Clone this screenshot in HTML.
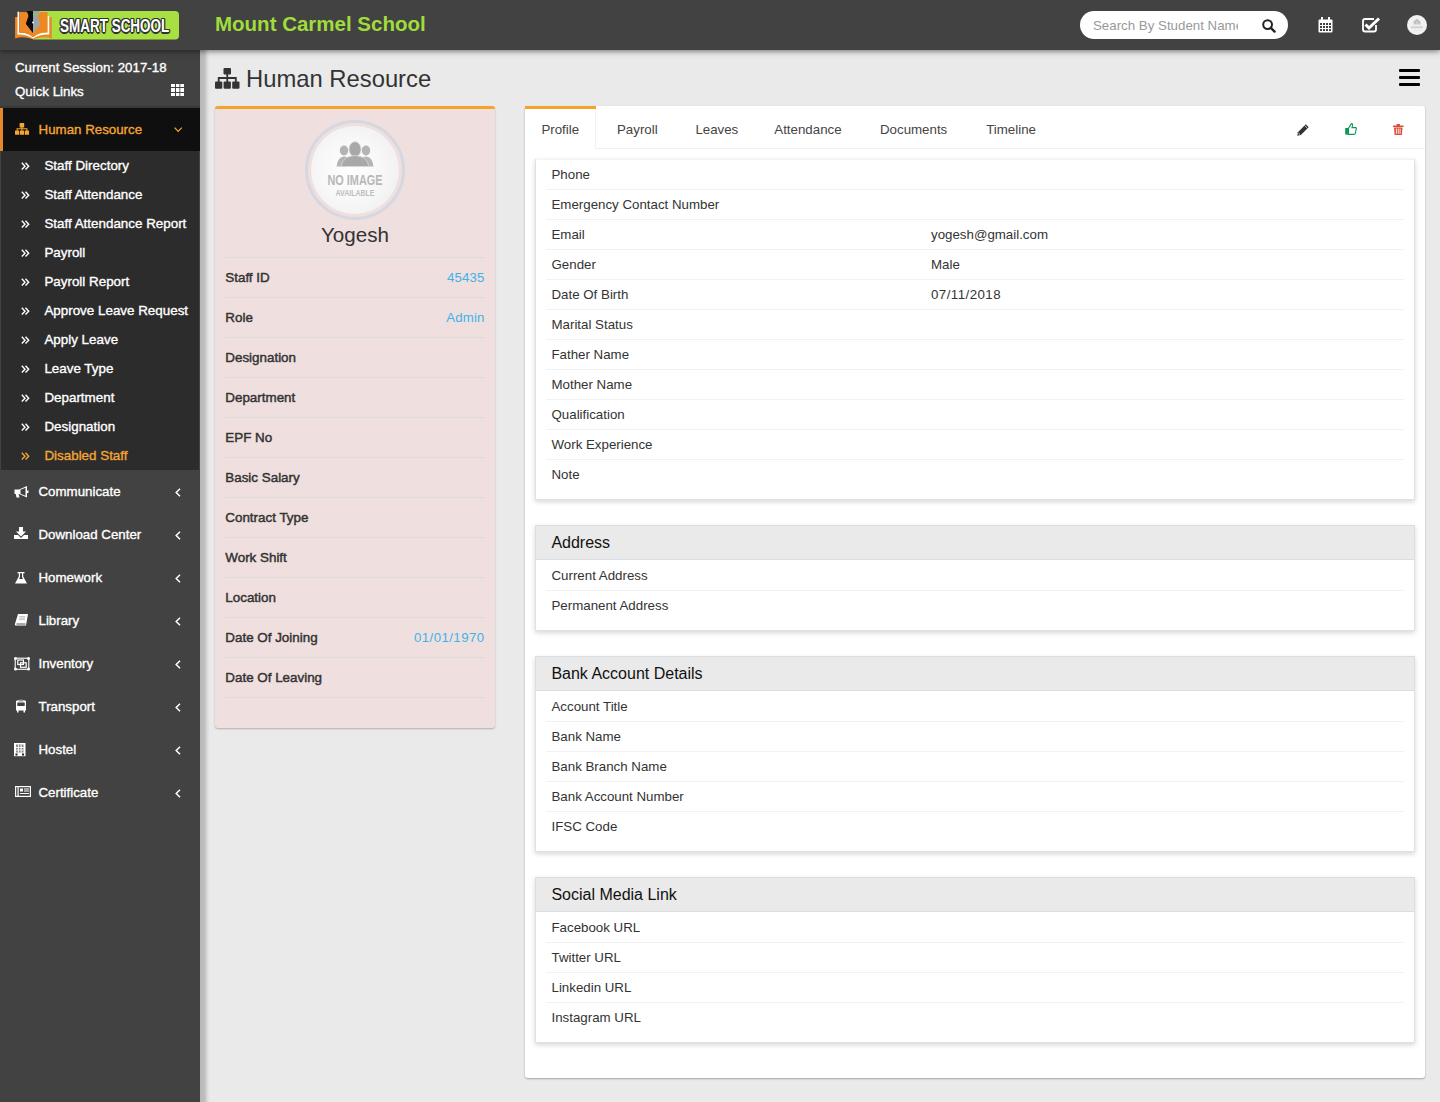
<!DOCTYPE html>
<html><head><meta charset="utf-8"><title>Human Resource</title><style>
*{margin:0;padding:0;box-sizing:border-box}
html,body{width:1440px;height:1102px;overflow:hidden}
body{background:#eaeaea;font-family:"Liberation Sans",sans-serif;position:relative}
.t{position:absolute;line-height:0;white-space:nowrap}
.a{position:absolute}
svg{position:absolute;overflow:visible}
</style></head>
<body>
<div class="a" style="left:0;top:0;width:1440px;height:50px;background:#424242;z-index:5;box-shadow:0 1px 6px rgba(0,0,0,.55)"></div>
<svg style="left:0;top:0;z-index:6" width="200" height="50" viewBox="0 0 200 50">
<path d="M33 11 H175 Q179 11 179 15 V35.5 Q179 39.5 175 39.5 H33 Z" fill="#a7e040"/>
<path d="M15.1 17.1 H18 V34 H48.5 V17.1 H51.8 V38.5 Q44 35.5 33 39.2 Q22 35.5 15.1 38.6 Z" fill="#ee8726"/>
<path d="M17.5 11.7 H19.2 V32.6 Q27 32 33 37.3 Q39 32 47.5 32.6 V16.2 H49.2 V34.6 Q40 34 33 38.6 Q26 34 17.5 34.6 Z" fill="#fff"/>
<path d="M19.2 12 H25.6 Q28.6 12.5 28.6 16 L25.9 23.7 L33 33 V37.3 Q27 32 19.2 32.6 Z" fill="#ee8726"/>
<path d="M40.3 12 H47.5 V32.6 Q39 32 33 37.3 V33 L40.2 23.7 L37.9 18 Q37.9 13 40.3 12 Z" fill="#ee8726"/>
<path d="M27 11 H33 V33 L25.9 23.7 L28.6 16 Z" fill="#0c0c0c"/>
<path d="M33 11 H39.3 L40.3 12 Q37.9 13 37.9 18 L40.2 23.7 L33 33 Z" fill="#9aa6ae"/>
<rect x="33" y="13.8" width="6" height="1" fill="#8ccf3a"/>
<circle cx="33" cy="22.5" r="0.9" fill="#fff"/>
</svg>
<div class="t" style="left:60px;top:26px;font-size:17.5px;font-weight:bold;color:#fff;transform-origin:0 0;transform:scaleX(0.77);z-index:7;text-shadow:-1.2px -1.2px 0 #333,1.2px -1.2px 0 #333,-1.2px 1.2px 0 #333,1.2px 1.2px 0 #333,0 1.5px 0 #333,1.5px 0 0 #333,-1.5px 0 0 #333,0 -1.5px 0 #333">SMART SCHOOL</div>
<div class="t" style="top:24px;font-size:20.5px;color:#a0dc3c;font-weight:bold;left:215px;z-index:6;">Mount Carmel School</div>
<div class="a" style="left:1080px;top:11px;width:208px;height:28px;border-radius:14px;background:#fff;z-index:6"></div>
<div class="t" style="top:26px;font-size:13.3px;color:#999;left:1093px;z-index:7;width:145px;overflow:hidden;height:20px;line-height:20px;top:16px">Search By Student Name</div>
<svg style="left:1262px;top:19px;z-index:7" width="14" height="14" viewBox="0 0 14 14"><circle cx="5.6" cy="5.6" r="4.4" fill="none" stroke="#222" stroke-width="2"/><path d="M8.8 8.8 L12.6 12.6" stroke="#222" stroke-width="2.4" stroke-linecap="round"/></svg>
<svg style="left:1318px;top:17px;z-index:7" width="15" height="16" viewBox="0 0 15 16">
<rect x="0.5" y="2.5" width="14" height="13" rx="1" fill="#fff"/>
<rect x="3" y="0" width="2" height="3.5" fill="#fff"/><rect x="10" y="0" width="2" height="3.5" fill="#fff"/>
<g fill="#424242"><rect x="2" y="6" width="2" height="2"/><rect x="5" y="6" width="2" height="2"/><rect x="8" y="6" width="2" height="2"/><rect x="11" y="6" width="2" height="2"/>
<rect x="2" y="9" width="2" height="2"/><rect x="5" y="9" width="2" height="2"/><rect x="8" y="9" width="2" height="2"/><rect x="11" y="9" width="2" height="2"/>
<rect x="2" y="12" width="2" height="2"/><rect x="5" y="12" width="2" height="2"/><rect x="8" y="12" width="2" height="2"/><rect x="11" y="12" width="2" height="2"/></g>
</svg>
<svg style="left:1362px;top:17px;z-index:7" width="18" height="15" viewBox="0 0 18 15">
<path d="M12 2 H3 Q1 2 1 4 V12.5 Q1 14.5 3 14.5 H12 Q14 14.5 14 12.5 V8" fill="none" stroke="#fff" stroke-width="1.8"/>
<path d="M3.5 7.5 L7 11 L17 1.5" fill="none" stroke="#fff" stroke-width="3"/>
</svg>
<div class="a" style="left:1407px;top:15px;width:20px;height:20px;border-radius:50%;background:#f1f1f1;z-index:7"></div>
<svg style="left:1407px;top:15px;z-index:8" width="20" height="20" viewBox="0 0 20 20"><g fill="#bdbdbd"><ellipse cx="10" cy="5.8" rx="1.6" ry="1.8"/><ellipse cx="8" cy="7" rx="1.3" ry="1.4"/><ellipse cx="12" cy="7" rx="1.3" ry="1.4"/><rect x="6.5" y="8.2" width="7" height="1.2"/></g><rect x="4" y="11.3" width="12" height="2" fill="#d2d2d2"/><rect x="6.5" y="15" width="7" height="0.6" fill="#dedede"/></svg>
<div class="a" style="left:0;top:50px;width:200px;height:1052px;background:#424242;z-index:3"></div>
<div class="a" style="left:200px;top:50px;width:10px;height:1052px;background:linear-gradient(to right,rgba(0,0,0,.22) 0,rgba(0,0,0,.19) 45%,rgba(0,0,0,.06) 75%,rgba(0,0,0,0) 100%);z-index:2"></div>
<div class="a" style="left:0;top:50px;width:200px;height:1052px;z-index:4">
</div>
<div class="t" style="top:68px;font-size:13.3px;color:#fff;left:15px;z-index:4;-webkit-text-stroke:0.35px #fff;">Current Session: 2017-18</div>
<div class="t" style="top:92px;font-size:13.3px;color:#fff;left:15px;z-index:4;-webkit-text-stroke:0.35px #fff;">Quick Links</div>
<svg style="left:171px;top:84px;z-index:4" width="13" height="12" viewBox="0 0 13 12"><g fill="#fff"><rect x="0" y="0" width="4" height="3"/><rect x="5" y="0" width="3.4" height="3"/><rect x="9.3" y="0" width="3.7" height="3"/><rect x="0" y="4" width="4" height="4"/><rect x="5" y="4" width="3.4" height="4"/><rect x="9.3" y="4" width="3.7" height="4"/><rect x="0" y="9" width="4" height="3"/><rect x="5" y="9" width="3.4" height="3"/><rect x="9.3" y="9" width="3.7" height="3"/></g></svg>
<div class="a" style="left:0;top:106px;width:200px;height:2px;background:#393939;z-index:4"></div>
<div class="a" style="left:0;top:108px;width:200px;height:43px;background:#0f0f0f;z-index:4;border-left:3px solid #e8872a"></div>
<svg style="left:15px;top:123.4px;z-index:5" width="14" height="12" viewBox="0 0 14 12"><g fill="#f3a633"><rect x="4.6" y="0" width="4.6" height="4.4" rx="0.5"/><rect x="0" y="7.6" width="4.2" height="4.2" rx="0.4"/><rect x="4.9" y="7.6" width="4.2" height="4.2" rx="0.4"/><rect x="9.8" y="7.6" width="4.2" height="4.2" rx="0.4"/></g><path d="M6.9 4 V7.8 M2.1 7.8 V5.7 H11.9 V7.8" fill="none" stroke="#f3a633" stroke-width="1.1"/></svg>
<div class="t" style="top:130px;font-size:13.3px;color:#f3a633;left:38.6px;z-index:4;-webkit-text-stroke:0.35px #f3a633;">Human Resource</div>
<svg style="left:174px;top:127px;z-index:5" width="9" height="6" viewBox="0 0 9 6"><path d="M0.6 0.6 L4.2 4.4 L7.8 0.6" fill="none" stroke="#f3a633" stroke-width="1.25"/></svg>
<div class="a" style="left:1px;top:151px;width:198px;height:318.5px;background:#2c2c2c;z-index:4"></div>
<svg style="left:20.5px;top:161.7px;z-index:5" width="9" height="9" viewBox="0 0 9 9"><path d="M0.8 0.8 L4 4.2 L0.8 7.6 M4.5 0.8 L7.7 4.2 L4.5 7.6" fill="none" stroke="#fff" stroke-width="1.4"/></svg>
<div class="t" style="top:166px;font-size:13.4px;color:#fff;left:44.4px;z-index:4;-webkit-text-stroke:0.35px #fff;">Staff Directory</div>
<svg style="left:20.5px;top:190.7px;z-index:5" width="9" height="9" viewBox="0 0 9 9"><path d="M0.8 0.8 L4 4.2 L0.8 7.6 M4.5 0.8 L7.7 4.2 L4.5 7.6" fill="none" stroke="#fff" stroke-width="1.4"/></svg>
<div class="t" style="top:195px;font-size:13.4px;color:#fff;left:44.4px;z-index:4;-webkit-text-stroke:0.35px #fff;">Staff Attendance</div>
<svg style="left:20.5px;top:219.7px;z-index:5" width="9" height="9" viewBox="0 0 9 9"><path d="M0.8 0.8 L4 4.2 L0.8 7.6 M4.5 0.8 L7.7 4.2 L4.5 7.6" fill="none" stroke="#fff" stroke-width="1.4"/></svg>
<div class="t" style="top:224px;font-size:13.4px;color:#fff;left:44.4px;z-index:4;-webkit-text-stroke:0.35px #fff;">Staff Attendance Report</div>
<svg style="left:20.5px;top:248.7px;z-index:5" width="9" height="9" viewBox="0 0 9 9"><path d="M0.8 0.8 L4 4.2 L0.8 7.6 M4.5 0.8 L7.7 4.2 L4.5 7.6" fill="none" stroke="#fff" stroke-width="1.4"/></svg>
<div class="t" style="top:253px;font-size:13.4px;color:#fff;left:44.4px;z-index:4;-webkit-text-stroke:0.35px #fff;">Payroll</div>
<svg style="left:20.5px;top:277.7px;z-index:5" width="9" height="9" viewBox="0 0 9 9"><path d="M0.8 0.8 L4 4.2 L0.8 7.6 M4.5 0.8 L7.7 4.2 L4.5 7.6" fill="none" stroke="#fff" stroke-width="1.4"/></svg>
<div class="t" style="top:282px;font-size:13.4px;color:#fff;left:44.4px;z-index:4;-webkit-text-stroke:0.35px #fff;">Payroll Report</div>
<svg style="left:20.5px;top:306.7px;z-index:5" width="9" height="9" viewBox="0 0 9 9"><path d="M0.8 0.8 L4 4.2 L0.8 7.6 M4.5 0.8 L7.7 4.2 L4.5 7.6" fill="none" stroke="#fff" stroke-width="1.4"/></svg>
<div class="t" style="top:311px;font-size:13.4px;color:#fff;left:44.4px;z-index:4;-webkit-text-stroke:0.35px #fff;">Approve Leave Request</div>
<svg style="left:20.5px;top:335.7px;z-index:5" width="9" height="9" viewBox="0 0 9 9"><path d="M0.8 0.8 L4 4.2 L0.8 7.6 M4.5 0.8 L7.7 4.2 L4.5 7.6" fill="none" stroke="#fff" stroke-width="1.4"/></svg>
<div class="t" style="top:340px;font-size:13.4px;color:#fff;left:44.4px;z-index:4;-webkit-text-stroke:0.35px #fff;">Apply Leave</div>
<svg style="left:20.5px;top:364.7px;z-index:5" width="9" height="9" viewBox="0 0 9 9"><path d="M0.8 0.8 L4 4.2 L0.8 7.6 M4.5 0.8 L7.7 4.2 L4.5 7.6" fill="none" stroke="#fff" stroke-width="1.4"/></svg>
<div class="t" style="top:369px;font-size:13.4px;color:#fff;left:44.4px;z-index:4;-webkit-text-stroke:0.35px #fff;">Leave Type</div>
<svg style="left:20.5px;top:393.7px;z-index:5" width="9" height="9" viewBox="0 0 9 9"><path d="M0.8 0.8 L4 4.2 L0.8 7.6 M4.5 0.8 L7.7 4.2 L4.5 7.6" fill="none" stroke="#fff" stroke-width="1.4"/></svg>
<div class="t" style="top:398px;font-size:13.4px;color:#fff;left:44.4px;z-index:4;-webkit-text-stroke:0.35px #fff;">Department</div>
<svg style="left:20.5px;top:422.7px;z-index:5" width="9" height="9" viewBox="0 0 9 9"><path d="M0.8 0.8 L4 4.2 L0.8 7.6 M4.5 0.8 L7.7 4.2 L4.5 7.6" fill="none" stroke="#fff" stroke-width="1.4"/></svg>
<div class="t" style="top:427px;font-size:13.4px;color:#fff;left:44.4px;z-index:4;-webkit-text-stroke:0.35px #fff;">Designation</div>
<svg style="left:20.5px;top:451.7px;z-index:5" width="9" height="9" viewBox="0 0 9 9"><path d="M0.8 0.8 L4 4.2 L0.8 7.6 M4.5 0.8 L7.7 4.2 L4.5 7.6" fill="none" stroke="#f3a633" stroke-width="1.4"/></svg>
<div class="t" style="top:456px;font-size:13.4px;color:#f3a633;left:44.4px;z-index:4;-webkit-text-stroke:0.35px #f3a633;">Disabled Staff</div>
<svg style="left:14px;top:485.5px;z-index:5" width="17" height="15" viewBox="0 0 17 15"><path d="M0.5 3.5 H5 L13 0 V11.5 L5 8 H4.5 L5.5 11.5 H2.5 L1.8 8 H0.5 Z" fill="#fff"/><path d="M6.5 3.8 L11.5 1.8 V9.7 L6.5 7.7 Z" fill="#424242"/><rect x="13" y="4.5" width="1.5" height="2.5" fill="#fff"/></svg>
<div class="t" style="top:492px;font-size:13.3px;color:#fff;left:38.5px;z-index:4;-webkit-text-stroke:0.35px #fff;">Communicate</div>
<svg style="left:175px;top:488px;z-index:5" width="6" height="9" viewBox="0 0 6 9"><path d="M5 0.8 L1.2 4.5 L5 8.2" fill="none" stroke="#fff" stroke-width="1.5"/></svg>
<svg style="left:14px;top:527.3px;z-index:5" width="17" height="15" viewBox="0 0 17 15"><path d="M5 0 H9 V4.5 H12 L7 9.5 L2 4.5 H5 Z" fill="#fff"/><path d="M0 8 H4 L7 11 L10 8 H14 V12 H0 Z" fill="#fff"/></svg>
<div class="t" style="top:535px;font-size:13.3px;color:#fff;left:38.5px;z-index:4;-webkit-text-stroke:0.35px #fff;">Download Center</div>
<svg style="left:175px;top:531px;z-index:5" width="6" height="9" viewBox="0 0 6 9"><path d="M5 0.8 L1.2 4.5 L5 8.2" fill="none" stroke="#fff" stroke-width="1.5"/></svg>
<svg style="left:15.2px;top:571.5px;z-index:5" width="17" height="15" viewBox="0 0 17 15"><path d="M2.5 0 H9.5 V1.3 H8.2 V4.5 L12 11.4 H0 L3.8 4.5 V1.3 H2.5 Z" fill="#fff"/><path d="M5 1.3 H7 V5 L8 7 H4 L5 5 Z" fill="#424242"/></svg>
<div class="t" style="top:578px;font-size:13.3px;color:#fff;left:38.5px;z-index:4;-webkit-text-stroke:0.35px #fff;">Homework</div>
<svg style="left:175px;top:574px;z-index:5" width="6" height="9" viewBox="0 0 6 9"><path d="M5 0.8 L1.2 4.5 L5 8.2" fill="none" stroke="#fff" stroke-width="1.5"/></svg>
<svg style="left:14.8px;top:614.4px;z-index:5" width="17" height="15" viewBox="0 0 17 15"><path d="M3 0 H13 L11 11.4 H0.5 Q-0.5 11.4 0 9.8 Z" fill="#fff"/><path d="M1.5 10 H10.5" stroke="#424242" stroke-width="0.9"/><rect x="4.3" y="2.2" width="6" height="1.3" fill="#bbb"/><rect x="4" y="4.5" width="6" height="1.3" fill="#bbb"/></svg>
<div class="t" style="top:621px;font-size:13.3px;color:#fff;left:38.5px;z-index:4;-webkit-text-stroke:0.35px #fff;">Library</div>
<svg style="left:175px;top:617px;z-index:5" width="6" height="9" viewBox="0 0 6 9"><path d="M5 0.8 L1.2 4.5 L5 8.2" fill="none" stroke="#fff" stroke-width="1.5"/></svg>
<svg style="left:14.3px;top:656.5px;z-index:5" width="17" height="15" viewBox="0 0 17 15"><rect x="1.2" y="1.2" width="13.6" height="11.1" fill="none" stroke="#fff" stroke-width="1.1"/><g fill="#fff"><circle cx="1.5" cy="1.5" r="1.5"/><circle cx="14.5" cy="1.5" r="1.5"/><circle cx="1.5" cy="12" r="1.5"/><circle cx="14.5" cy="12" r="1.5"/></g><rect x="3.8" y="3" width="5.6" height="4.5" fill="none" stroke="#fff" stroke-width="1.2"/><rect x="6.5" y="5.8" width="5.7" height="4.5" fill="none" stroke="#fff" stroke-width="1.2"/></svg>
<div class="t" style="top:664px;font-size:13.3px;color:#fff;left:38.5px;z-index:4;-webkit-text-stroke:0.35px #fff;">Inventory</div>
<svg style="left:175px;top:660px;z-index:5" width="6" height="9" viewBox="0 0 6 9"><path d="M5 0.8 L1.2 4.5 L5 8.2" fill="none" stroke="#fff" stroke-width="1.5"/></svg>
<svg style="left:14.6px;top:699.4px;z-index:5" width="17" height="15" viewBox="0 0 17 15"><path d="M1 2 Q6 -0.5 11 2 V11.5 H10 V13.5 H8.5 V11.5 H3.5 V13.5 H2 V11.5 H1 Z" fill="#fff"/><rect x="2.3" y="3.5" width="7.4" height="3.5" fill="#424242"/><rect x="3.5" y="1.5" width="5" height="0.8" fill="#424242"/></svg>
<div class="t" style="top:707px;font-size:13.3px;color:#fff;left:38.5px;z-index:4;-webkit-text-stroke:0.35px #fff;">Transport</div>
<svg style="left:175px;top:703px;z-index:5" width="6" height="9" viewBox="0 0 6 9"><path d="M5 0.8 L1.2 4.5 L5 8.2" fill="none" stroke="#fff" stroke-width="1.5"/></svg>
<svg style="left:14.3px;top:742.6px;z-index:5" width="17" height="15" viewBox="0 0 17 15"><rect x="0" y="0" width="11.5" height="13.2" fill="#fff"/><g fill="#888"><rect x="2" y="1.5" width="7.5" height="8"/></g><g fill="#fff"><rect x="3.9" y="1.5" width="1" height="8"/><rect x="6.6" y="1.5" width="1" height="8"/><rect x="2" y="4" width="7.5" height="0.9"/><rect x="2" y="6.6" width="7.5" height="0.9"/></g><rect x="1.5" y="10.5" width="2" height="2" fill="#222"/><rect x="8" y="10.5" width="2" height="2" fill="#222"/></svg>
<div class="t" style="top:750px;font-size:13.3px;color:#fff;left:38.5px;z-index:4;-webkit-text-stroke:0.35px #fff;">Hostel</div>
<svg style="left:175px;top:746px;z-index:5" width="6" height="9" viewBox="0 0 6 9"><path d="M5 0.8 L1.2 4.5 L5 8.2" fill="none" stroke="#fff" stroke-width="1.5"/></svg>
<svg style="left:14.6px;top:786.4px;z-index:5" width="17" height="15" viewBox="0 0 17 15"><rect x="0.6" y="0.6" width="14.8" height="9.8" fill="none" stroke="#fff" stroke-width="1.2"/><rect x="2.5" y="0.6" width="1.2" height="9.8" fill="#fff"/><rect x="5" y="2.5" width="3" height="3" fill="#fff"/><g fill="#fff"><rect x="9" y="2.5" width="5" height="1"/><rect x="9" y="4.5" width="5" height="1"/><rect x="5" y="7" width="9" height="1"/></g></svg>
<div class="t" style="top:793px;font-size:13.3px;color:#fff;left:38.5px;z-index:4;-webkit-text-stroke:0.35px #fff;">Certificate</div>
<svg style="left:175px;top:789px;z-index:5" width="6" height="9" viewBox="0 0 6 9"><path d="M5 0.8 L1.2 4.5 L5 8.2" fill="none" stroke="#fff" stroke-width="1.5"/></svg>
<svg style="left:214.7px;top:68px" width="24.5" height="21" viewBox="0 0 24.5 21"><g fill="#333"><rect x="8.5" y="0" width="7.5" height="6.5" rx="1"/><rect x="0" y="13.5" width="7.3" height="7.3" rx="1"/><rect x="8.6" y="13.5" width="7.3" height="7.3" rx="1"/><rect x="17.2" y="13.5" width="7.3" height="7.3" rx="1"/></g><path d="M12.25 6 V14 M3.7 14 V10 H20.8 V14" fill="none" stroke="#333" stroke-width="1.8"/></svg>
<div class="t" style="top:79px;font-size:23.8px;color:#333;left:246px;">Human Resource</div>
<div class="a" style="left:1399px;top:69px;width:21px;height:3px;background:#000;border-radius:1px"></div>
<div class="a" style="left:1399px;top:76px;width:21px;height:3px;background:#000;border-radius:1px"></div>
<div class="a" style="left:1399px;top:83px;width:21px;height:3px;background:#000;border-radius:1px"></div>
<div class="a" style="left:215px;top:106px;width:280px;height:622px;background:#efdfdf;border-top:3px solid #f5a42b;border-radius:3px;box-shadow:0 1px 2px rgba(0,0,0,.25)"></div>
<div class="a" style="left:305px;top:119.5px;width:100px;height:100px;border-radius:50%;border:3px solid #d5d8e0;padding:3px"><div style="width:100%;height:100%;border-radius:50%;background:radial-gradient(circle at 45% 50%,#fefefe 0,#f8f8f8 45%,#ececec 100%)"></div></div>
<svg style="left:336px;top:141.5px" width="38" height="25" viewBox="0 0 38 25"><g fill="#b4b4b4"><ellipse cx="8" cy="8.5" rx="4.2" ry="5"/><ellipse cx="30" cy="8.5" rx="4.2" ry="5"/><path d="M0.5 24.5 Q1.5 15 8 14.5 Q12 14.5 13.5 16 L10 24.5 Z"/><path d="M37.5 24.5 Q36.5 15 30 14.5 Q26 14.5 24.5 16 L28 24.5 Z"/></g><g fill="#a8a8a8" stroke="#d8d8d8" stroke-width="0.8"><ellipse cx="19" cy="7.2" rx="6" ry="7.5"/><path d="M5 24.5 Q7 14 19 13.5 Q31 14 33 24.5 Z"/></g></svg>
<div class="t" style="left:355px;top:180px;transform:translateX(-50%) scaleX(0.75);font-size:14.5px;font-weight:bold;color:#b8b8b8">NO IMAGE</div>
<div class="t" style="left:355px;top:192.5px;transform:translateX(-50%) scaleX(0.76);font-size:9.2px;font-weight:bold;color:#bdbdbd">AVAILABLE</div>
<div class="t" style="top:235px;font-size:20.6px;color:#333;left:355px;transform:translateX(-50%);">Yogesh</div>
<div class="a" style="left:225px;top:257px;width:260px;height:1px;background:#dcdcdc"></div>
<div class="a" style="left:225px;top:297px;width:260px;height:1px;background:#dcdcdc"></div>
<div class="a" style="left:225px;top:337px;width:260px;height:1px;background:#dcdcdc"></div>
<div class="a" style="left:225px;top:377px;width:260px;height:1px;background:#dcdcdc"></div>
<div class="a" style="left:225px;top:417px;width:260px;height:1px;background:#dcdcdc"></div>
<div class="a" style="left:225px;top:457px;width:260px;height:1px;background:#dcdcdc"></div>
<div class="a" style="left:225px;top:497px;width:260px;height:1px;background:#dcdcdc"></div>
<div class="a" style="left:225px;top:537px;width:260px;height:1px;background:#dcdcdc"></div>
<div class="a" style="left:225px;top:577px;width:260px;height:1px;background:#dcdcdc"></div>
<div class="a" style="left:225px;top:617px;width:260px;height:1px;background:#dcdcdc"></div>
<div class="a" style="left:225px;top:657px;width:260px;height:1px;background:#dcdcdc"></div>
<div class="a" style="left:225px;top:697px;width:260px;height:1px;background:#dcdcdc"></div>
<div class="t" style="top:278px;font-size:13.4px;color:#333;left:225.3px;-webkit-text-stroke:0.45px #333;">Staff ID</div>
<div class="t" style="top:278px;font-size:13.2px;color:#3fb3e8;letter-spacing:0.15px;right:955.5px;">45435</div>
<div class="t" style="top:318px;font-size:13.4px;color:#333;left:225.3px;-webkit-text-stroke:0.45px #333;">Role</div>
<div class="t" style="top:318px;font-size:13.2px;color:#3fb3e8;letter-spacing:0.15px;right:955.5px;">Admin</div>
<div class="t" style="top:358px;font-size:13.4px;color:#333;left:225.3px;-webkit-text-stroke:0.45px #333;">Designation</div>
<div class="t" style="top:398px;font-size:13.4px;color:#333;left:225.3px;-webkit-text-stroke:0.45px #333;">Department</div>
<div class="t" style="top:438px;font-size:13.4px;color:#333;left:225.3px;-webkit-text-stroke:0.45px #333;">EPF No</div>
<div class="t" style="top:478px;font-size:13.4px;color:#333;left:225.3px;-webkit-text-stroke:0.45px #333;">Basic Salary</div>
<div class="t" style="top:518px;font-size:13.4px;color:#333;left:225.3px;-webkit-text-stroke:0.45px #333;">Contract Type</div>
<div class="t" style="top:558px;font-size:13.4px;color:#333;left:225.3px;-webkit-text-stroke:0.45px #333;">Work Shift</div>
<div class="t" style="top:598px;font-size:13.4px;color:#333;left:225.3px;-webkit-text-stroke:0.45px #333;">Location</div>
<div class="t" style="top:638px;font-size:13.4px;color:#333;left:225.3px;-webkit-text-stroke:0.45px #333;">Date Of Joining</div>
<div class="t" style="top:638px;font-size:13.2px;color:#3fb3e8;letter-spacing:0.45px;right:955.5px;">01/01/1970</div>
<div class="t" style="top:678px;font-size:13.4px;color:#333;left:225.3px;-webkit-text-stroke:0.45px #333;">Date Of Leaving</div>
<div class="a" style="left:525px;top:106px;width:900px;height:972px;background:#fff;border-radius:3px;box-shadow:0 1px 2px rgba(0,0,0,.3)"></div>
<div class="a" style="left:596px;top:148px;width:829px;height:1px;background:#f0f0f0"></div>
<div class="a" style="left:595px;top:109px;width:1px;height:40px;background:#f0f0f0"></div>
<div class="a" style="left:525px;top:106px;width:71px;height:3px;background:#f5a42b"></div>
<div class="t" style="top:130px;font-size:13.3px;color:#444;left:541.4px;">Profile</div>
<div class="t" style="top:130px;font-size:13.3px;color:#444;left:617px;">Payroll</div>
<div class="t" style="top:130px;font-size:13.3px;color:#444;left:695.4px;">Leaves</div>
<div class="t" style="top:130px;font-size:13.3px;color:#444;left:774.3px;">Attendance</div>
<div class="t" style="top:130px;font-size:13.3px;color:#444;left:880px;">Documents</div>
<div class="t" style="top:130px;font-size:13.3px;color:#444;left:986.2px;">Timeline</div>
<svg style="left:1296.5px;top:123.5px" width="12" height="12" viewBox="0 0 12 12"><path d="M8.8 0.3 L11.7 3.2 L3.8 11.1 L0.3 11.7 L0.9 8.2 Z" fill="#333"/><path d="M7.6 1.5 L10.5 4.4" stroke="#fff" stroke-width="0.7"/><path d="M1.4 9 L3 10.6" stroke="#fff" stroke-width="0.8"/></svg>
<svg style="left:1345px;top:123px" width="12" height="12" viewBox="0 0 12 12"><path d="M3.5 5.2 L6.4 0.6 Q7.7 0.4 7.6 2 L7 4.6 H10.5 Q11.6 4.8 11.3 6 L10.3 10.6 Q10 11.4 9 11.4 H3.5 Z" fill="#fff" stroke="#0a9a55" stroke-width="1.1"/><rect x="0.2" y="5" width="2.8" height="6.6" fill="#0a9a55"/></svg>
<svg style="left:1393.3px;top:123.8px" width="10.5" height="11" viewBox="0 0 10.5 11"><path d="M0 1.6 H10.5 V2.9 H0 Z M3.6 0 H6.9 V1.6 H3.6 Z" fill="#dd4b39"/><path d="M1 3.4 H9.5 L8.9 11 H1.6 Z" fill="#dd4b39"/><path d="M3.4 4.6 V9.8 M5.25 4.6 V9.8 M7.1 4.6 V9.8" stroke="#fff" stroke-width="0.9"/></svg>
<div class="a" style="left:535px;top:159px;width:880px;height:341px;background:#fff;border:1px solid #dce2e7;box-shadow:0 2px 5px rgba(0,0,0,.16)"></div>
<div class="a" style="left:536px;top:159px;width:878px;height:1px;background:#f3f3f3"></div>
<div class="t" style="top:175px;font-size:13.3px;color:#333;left:551.5px;">Phone</div>
<div class="a" style="left:546px;top:188.5px;width:858px;height:1px;background:#f2f2f2"></div>
<div class="t" style="top:205px;font-size:13.3px;color:#333;left:551.5px;">Emergency Contact Number</div>
<div class="a" style="left:546px;top:218.5px;width:858px;height:1px;background:#f2f2f2"></div>
<div class="t" style="top:235px;font-size:13.3px;color:#333;left:551.5px;">Email</div>
<div class="t" style="top:235px;font-size:13.3px;color:#333;left:931px;">yogesh@gmail.com</div>
<div class="a" style="left:546px;top:248.5px;width:858px;height:1px;background:#f2f2f2"></div>
<div class="t" style="top:265px;font-size:13.3px;color:#333;left:551.5px;">Gender</div>
<div class="t" style="top:265px;font-size:13.3px;color:#333;left:931px;">Male</div>
<div class="a" style="left:546px;top:278.5px;width:858px;height:1px;background:#f2f2f2"></div>
<div class="t" style="top:295px;font-size:13.3px;color:#333;left:551.5px;">Date Of Birth</div>
<div class="t" style="top:295px;font-size:13.3px;color:#333;letter-spacing:0.45px;left:931px;">07/11/2018</div>
<div class="a" style="left:546px;top:308.5px;width:858px;height:1px;background:#f2f2f2"></div>
<div class="t" style="top:325px;font-size:13.3px;color:#333;left:551.5px;">Marital Status</div>
<div class="a" style="left:546px;top:338.5px;width:858px;height:1px;background:#f2f2f2"></div>
<div class="t" style="top:355px;font-size:13.3px;color:#333;left:551.5px;">Father Name</div>
<div class="a" style="left:546px;top:368.5px;width:858px;height:1px;background:#f2f2f2"></div>
<div class="t" style="top:385px;font-size:13.3px;color:#333;left:551.5px;">Mother Name</div>
<div class="a" style="left:546px;top:398.5px;width:858px;height:1px;background:#f2f2f2"></div>
<div class="t" style="top:415px;font-size:13.3px;color:#333;left:551.5px;">Qualification</div>
<div class="a" style="left:546px;top:428.5px;width:858px;height:1px;background:#f2f2f2"></div>
<div class="t" style="top:445px;font-size:13.3px;color:#333;left:551.5px;">Work Experience</div>
<div class="a" style="left:546px;top:458.5px;width:858px;height:1px;background:#f2f2f2"></div>
<div class="t" style="top:475px;font-size:13.3px;color:#333;left:551.5px;">Note</div>
<div class="a" style="left:535px;top:525px;width:880px;height:106px;background:#fff;border:1px solid #dce2e7;box-shadow:0 2px 5px rgba(0,0,0,.16)"></div>
<div class="a" style="left:535px;top:525px;width:880px;height:35px;background:#eaeaea;border:1px solid #d8dee3"></div>
<div class="t" style="top:543px;font-size:16px;color:#111;left:551.4px;">Address</div>
<div class="t" style="top:576px;font-size:13.3px;color:#333;left:551.5px;">Current Address</div>
<div class="a" style="left:546px;top:589.5px;width:858px;height:1px;background:#f2f2f2"></div>
<div class="t" style="top:606px;font-size:13.3px;color:#333;left:551.5px;">Permanent Address</div>
<div class="a" style="left:535px;top:656px;width:880px;height:196px;background:#fff;border:1px solid #dce2e7;box-shadow:0 2px 5px rgba(0,0,0,.16)"></div>
<div class="a" style="left:535px;top:656px;width:880px;height:35px;background:#eaeaea;border:1px solid #d8dee3"></div>
<div class="t" style="top:674px;font-size:16px;color:#111;left:551.4px;">Bank Account Details</div>
<div class="t" style="top:707px;font-size:13.3px;color:#333;left:551.5px;">Account Title</div>
<div class="a" style="left:546px;top:720.5px;width:858px;height:1px;background:#f2f2f2"></div>
<div class="t" style="top:737px;font-size:13.3px;color:#333;left:551.5px;">Bank Name</div>
<div class="a" style="left:546px;top:750.5px;width:858px;height:1px;background:#f2f2f2"></div>
<div class="t" style="top:767px;font-size:13.3px;color:#333;left:551.5px;">Bank Branch Name</div>
<div class="a" style="left:546px;top:780.5px;width:858px;height:1px;background:#f2f2f2"></div>
<div class="t" style="top:797px;font-size:13.3px;color:#333;left:551.5px;">Bank Account Number</div>
<div class="a" style="left:546px;top:810.5px;width:858px;height:1px;background:#f2f2f2"></div>
<div class="t" style="top:827px;font-size:13.3px;color:#333;left:551.5px;">IFSC Code</div>
<div class="a" style="left:535px;top:877px;width:880px;height:166px;background:#fff;border:1px solid #dce2e7;box-shadow:0 2px 5px rgba(0,0,0,.16)"></div>
<div class="a" style="left:535px;top:877px;width:880px;height:35px;background:#eaeaea;border:1px solid #d8dee3"></div>
<div class="t" style="top:895px;font-size:16px;color:#111;left:551.4px;">Social Media Link</div>
<div class="t" style="top:928px;font-size:13.3px;color:#333;left:551.5px;">Facebook URL</div>
<div class="a" style="left:546px;top:941.5px;width:858px;height:1px;background:#f2f2f2"></div>
<div class="t" style="top:958px;font-size:13.3px;color:#333;left:551.5px;">Twitter URL</div>
<div class="a" style="left:546px;top:971.5px;width:858px;height:1px;background:#f2f2f2"></div>
<div class="t" style="top:988px;font-size:13.3px;color:#333;left:551.5px;">Linkedin URL</div>
<div class="a" style="left:546px;top:1001.5px;width:858px;height:1px;background:#f2f2f2"></div>
<div class="t" style="top:1018px;font-size:13.3px;color:#333;left:551.5px;">Instagram URL</div>

</body></html>
